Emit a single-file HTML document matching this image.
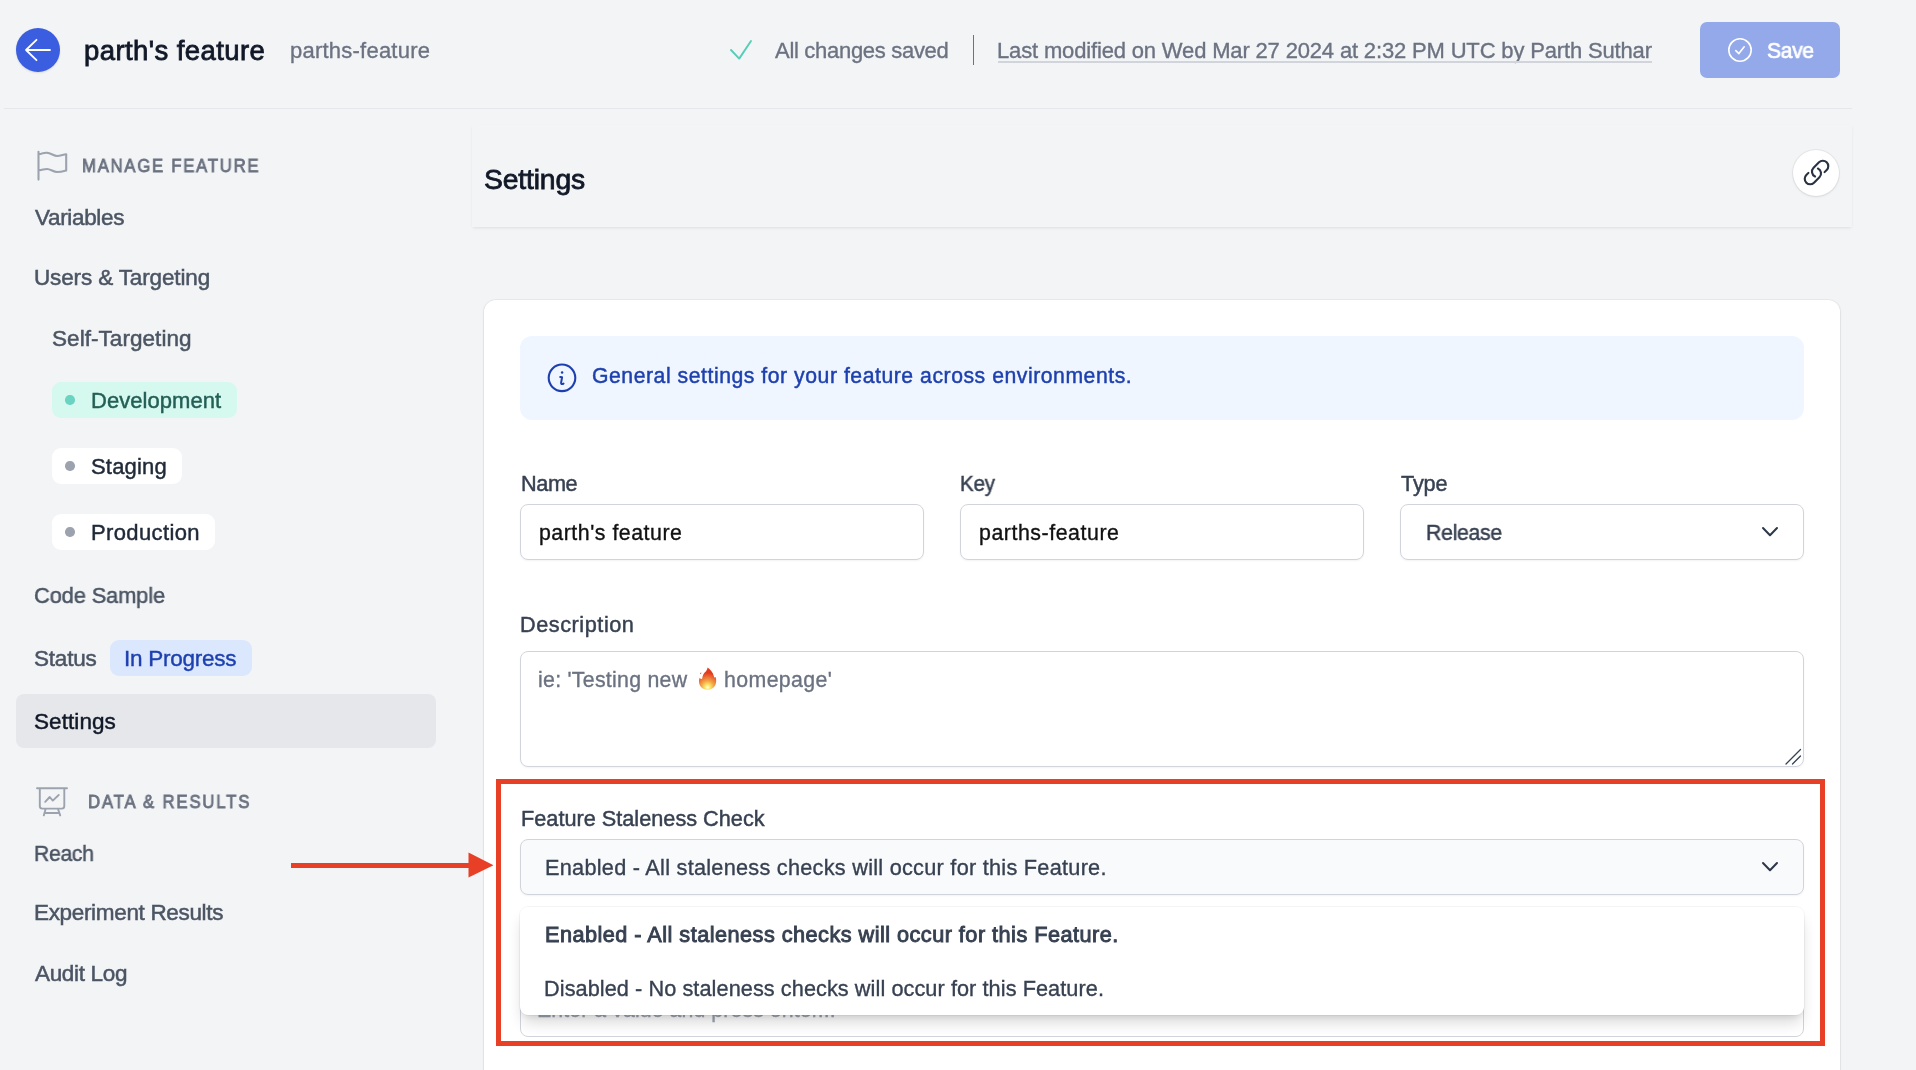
<!DOCTYPE html>
<html><head><meta charset="utf-8">
<style>
*{box-sizing:border-box;margin:0;padding:0}
html,body{width:1916px;height:1070px;overflow:hidden;background:#f3f4f6;font-family:"Liberation Sans",sans-serif}
.a{position:absolute}
.t{position:absolute;white-space:nowrap;line-height:normal;will-change:transform}
svg{position:absolute;overflow:visible}
</style></head><body>
<!-- header -->
<div class="a" style="left:16px;top:28px;width:44px;height:44px;border-radius:50%;background:#3b5ddf;box-shadow:0 1px 2px rgba(0,0,0,.12)"></div>
<svg style="left:0;top:0" width="1916" height="120">
 <path d="M26 50 H50 M36.5 39.8 L26 50 L36.5 60.2" fill="none" stroke="#fff" stroke-width="1.8" stroke-linecap="round" stroke-linejoin="round"/>
 <path d="M731 50 L739.2 58.6 L751 41" fill="none" stroke="#56cdb8" stroke-width="1.9" stroke-linecap="round" stroke-linejoin="round"/>
</svg>
<div class="a" style="left:4px;top:108px;width:1848px;height:1px;background:#e5e7eb"></div>
<div class="t" id="title" style="left:84.10px;top:35.00px;font-size:27.5px;color:#111827;letter-spacing:0.418px;-webkit-text-stroke:0.8px #111827;">parth's feature</div>
<div class="t" id="keyh" style="left:289.57px;top:37.80px;font-size:22px;color:#6b7280;letter-spacing:0.232px;-webkit-text-stroke:0.35px #6b7280;">parths-feature</div>
<div class="t" id="saved" style="left:774.97px;top:37.80px;font-size:22px;color:#6b7280;letter-spacing:-0.298px;-webkit-text-stroke:0.35px #6b7280;">All changes saved</div>
<div class="a" style="left:972.5px;top:35px;width:1.5px;height:30px;background:#6b7280"></div>
<div class="t" id="mod" style="left:997.17px;top:37.80px;font-size:22px;color:#6b7280;letter-spacing:-0.159px;-webkit-text-stroke:0.35px #6b7280;">Last modified on Wed Mar 27 2024 at 2:32 PM UTC by Parth Suthar</div>
<div class="a" style="left:998px;top:61px;width:654px;height:1.5px;background:#d1d5db"></div>
<div class="a" style="left:1700px;top:22px;width:140px;height:56px;border-radius:7px;background:#93a9ea"></div>
<svg style="left:0;top:0" width="1916" height="120">
 <circle cx="1740" cy="50" r="11.2" fill="none" stroke="#fff" stroke-width="1.6"/>
 <path d="M1735.8 50.6 L1738.9 53.6 L1744.2 46.8" fill="none" stroke="#fff" stroke-width="1.6" stroke-linecap="round" stroke-linejoin="round"/>
</svg>
<div class="t" id="save" style="left:1767.38px;top:37.80px;font-size:22px;color:#ffffff;letter-spacing:-0.356px;-webkit-text-stroke:0.7px #ffffff;transform:scaleX(0.96);transform-origin:0 0;">Save</div>

<!-- sidebar -->
<svg style="left:0;top:0" width="470" height="1070">
 <path d="M38.5 151.8 V179.6 M38.5 154.6 C42 153.2 44 152.6 47 152.8 C51 153.3 54 156 57 156 C60.5 156 63 154.6 66.2 154.2 V170.4 C63 171.3 60.5 172 57 172 C53.5 172 50.5 169 47 169 C43.5 169 41 169.8 38.5 170.6" fill="none" stroke="#9ca3af" stroke-width="2.1" stroke-linecap="round" stroke-linejoin="round"/>
 <path d="M37 788.3 H67 M39.8 788.3 V806 Q39.8 808.6 42.4 808.6 H61.7 Q64.3 808.6 64.3 806 V788.3 M45.6 809 L43.8 815.4 M58 809 L60.2 815.4 M45 813 H59 M45.2 801.8 L49.7 797 L52.8 800.6 L58.7 795" fill="none" stroke="#9ca3af" stroke-width="1.9" stroke-linecap="round" stroke-linejoin="round"/>
</svg>
<div class="t" id="manage" style="left:82.28px;top:154.80px;font-size:18.6px;color:#6b7280;letter-spacing:1.929px;-webkit-text-stroke:0.85px #6b7280;transform:scaleX(0.9);transform-origin:0 0;">MANAGE FEATURE</div>
<div class="t" id="variables" style="left:35.25px;top:205.20px;font-size:22.5px;color:#4b5563;letter-spacing:-0.335px;-webkit-text-stroke:0.5px #4b5563;">Variables</div>
<div class="t" id="users" style="left:34.25px;top:265.00px;font-size:22.5px;color:#4b5563;letter-spacing:-0.138px;-webkit-text-stroke:0.5px #4b5563;">Users &amp; Targeting</div>
<div class="t" id="self" style="left:52.05px;top:325.50px;font-size:22.5px;color:#4b5563;letter-spacing:0.053px;-webkit-text-stroke:0.5px #4b5563;">Self-Targeting</div>
<div class="a" style="left:52px;top:382px;width:185px;height:36px;border-radius:9px;background:#d5f8ef"></div>
<div class="a" style="left:65.3px;top:395.3px;width:9.4px;height:9.4px;border-radius:50%;background:#6bd3c1"></div>
<div class="t" id="dev" style="left:91.02px;top:388.00px;font-size:22px;color:#245f56;letter-spacing:0.044px;-webkit-text-stroke:0.45px #245f56;">Development</div>
<div class="a" style="left:52px;top:448px;width:130px;height:36px;border-radius:9px;background:#fff"></div>
<div class="a" style="left:65.3px;top:461.3px;width:9.4px;height:9.4px;border-radius:50%;background:#9ca3af"></div>
<div class="t" id="staging" style="left:91.22px;top:454.00px;font-size:22px;color:#1f2937;letter-spacing:0.195px;-webkit-text-stroke:0.45px #1f2937;">Staging</div>
<div class="a" style="left:52px;top:514px;width:163px;height:36px;border-radius:9px;background:#fff"></div>
<div class="a" style="left:65.3px;top:527.3px;width:9.4px;height:9.4px;border-radius:50%;background:#9ca3af"></div>
<div class="t" id="prod" style="left:91.22px;top:520.00px;font-size:22px;color:#1f2937;letter-spacing:0.379px;-webkit-text-stroke:0.45px #1f2937;">Production</div>
<div class="t" id="code" style="left:34.17px;top:582.90px;font-size:22.5px;color:#4b5563;letter-spacing:-0.119px;-webkit-text-stroke:0.5px #4b5563;transform:scaleX(0.97);transform-origin:0 0;">Code Sample</div>
<div class="t" id="status" style="left:34.25px;top:645.90px;font-size:22.5px;color:#4b5563;letter-spacing:-0.207px;-webkit-text-stroke:0.5px #4b5563;">Status</div>
<div class="a" style="left:110px;top:640px;width:142px;height:36px;border-radius:9px;background:#dbe7fc"></div>
<div class="t" id="inprog" style="left:123.60px;top:645.90px;font-size:22.5px;color:#1e40af;letter-spacing:-0.260px;-webkit-text-stroke:0.4px #1e40af;">In Progress</div>
<div class="a" style="left:16px;top:694px;width:420px;height:54px;border-radius:8px;background:#e5e7eb"></div>
<div class="t" id="navsettings" style="left:34.23px;top:708.60px;font-size:22.5px;color:#111827;letter-spacing:0.072px;-webkit-text-stroke:0.45px #111827;">Settings</div>
<div class="t" id="data" style="left:88.28px;top:791.20px;font-size:18.6px;color:#6b7280;letter-spacing:2.030px;-webkit-text-stroke:0.85px #6b7280;transform:scaleX(0.9);transform-origin:0 0;">DATA &amp; RESULTS</div>
<div class="t" id="reach" style="left:34.30px;top:841.30px;font-size:22.5px;color:#4b5563;letter-spacing:-0.315px;-webkit-text-stroke:0.5px #4b5563;transform:scaleX(0.94);transform-origin:0 0;">Reach</div>
<div class="t" id="exp" style="left:34.25px;top:900.40px;font-size:22.5px;color:#4b5563;letter-spacing:-0.331px;-webkit-text-stroke:0.5px #4b5563;">Experiment Results</div>
<div class="t" id="audit" style="left:35.25px;top:960.60px;font-size:22.5px;color:#4b5563;letter-spacing:-0.333px;-webkit-text-stroke:0.5px #4b5563;">Audit Log</div>

<!-- settings header -->
<div class="a" style="left:472px;top:125px;width:1380px;height:102px;background:#f3f4f6;box-shadow:0 2px 3px -1px rgba(0,0,0,.09),1px 0 2px -1px rgba(0,0,0,.06),-1px 0 2px -1px rgba(0,0,0,.04)"></div>
<div class="t" id="hsettings" style="left:484.30px;top:163.00px;font-size:28.3px;color:#111827;letter-spacing:-0.157px;-webkit-text-stroke:0.8px #111827;">Settings</div>
<div class="a" style="left:1793px;top:150px;width:46px;height:46px;border-radius:50%;background:#fff;box-shadow:0 0 0 1px rgba(0,0,0,.05),0 1px 3px rgba(0,0,0,.08)"></div>
<svg style="left:1801.5px;top:158.2px" width="29" height="29" viewBox="0 0 24 24">
 <path d="M13.19 8.688a4.5 4.5 0 011.242 7.244l-4.5 4.5a4.5 4.5 0 01-6.364-6.364l1.757-1.757m13.35-.622l1.757-1.757a4.5 4.5 0 00-6.364-6.364l-4.5 4.5a4.5 4.5 0 001.242 7.244" fill="none" stroke="#283241" stroke-width="1.75" stroke-linecap="round" stroke-linejoin="round"/>
</svg>

<!-- card -->
<div class="a" style="left:484px;top:300px;width:1356px;height:900px;border-radius:12px;background:#fff;box-shadow:0 0 0 1px rgba(0,0,0,.04),0 1px 3px rgba(0,0,0,.08)"></div>
<div class="a" style="left:520px;top:336px;width:1284px;height:84px;border-radius:12px;background:#eff6ff"></div>
<svg style="left:0;top:0" width="1916" height="1070">
 <circle cx="562" cy="377.8" r="13.3" fill="none" stroke="#1e40af" stroke-width="2.1"/>
 <path d="M560.2 376.9 L562.1 377.3 L561.1 382.6 C560.9 384 561.9 384.6 563.5 383.6" fill="none" stroke="#1e40af" stroke-width="2" stroke-linecap="round" stroke-linejoin="round"/>
 <circle cx="562.1" cy="372.4" r="1.25" fill="#1e40af"/>
</svg>
<div class="t" id="info" style="left:592.12px;top:363.90px;font-size:21.2px;color:#1e40af;letter-spacing:0.540px;-webkit-text-stroke:0.45px #1e40af;">General settings for your feature across environments.</div>

<div class="t" id="name" style="left:520.52px;top:470.80px;font-size:21.7px;color:#374151;letter-spacing:-0.413px;-webkit-text-stroke:0.45px #374151;">Name</div>
<div class="t" id="key" style="left:960.36px;top:470.70px;font-size:21.7px;color:#374151;letter-spacing:-0.225px;-webkit-text-stroke:0.45px #374151;transform:scaleX(0.95);transform-origin:0 0;">Key</div>
<div class="t" id="type" style="left:1401.32px;top:471.10px;font-size:21.7px;color:#374151;letter-spacing:-0.169px;-webkit-text-stroke:0.45px #374151;">Type</div>
<div class="a" style="left:520px;top:504px;width:404px;height:56px;border:1px solid #d1d5db;border-radius:8px;background:#fff;box-shadow:0 1px 2px rgba(0,0,0,.05)"></div>
<div class="a" style="left:960px;top:504px;width:404px;height:56px;border:1px solid #d1d5db;border-radius:8px;background:#fff;box-shadow:0 1px 2px rgba(0,0,0,.05)"></div>
<div class="a" style="left:1400px;top:504px;width:404px;height:56px;border:1px solid #d1d5db;border-radius:8px;background:#fff;box-shadow:0 1px 2px rgba(0,0,0,.05)"></div>
<div class="t" id="inname" style="left:538.97px;top:520.70px;font-size:21.3px;color:#111111;letter-spacing:0.530px;-webkit-text-stroke:0.35px #111111;">parth's feature</div>
<div class="t" id="inkey" style="left:979.38px;top:520.70px;font-size:21.3px;color:#111111;letter-spacing:0.562px;-webkit-text-stroke:0.35px #111111;">parths-feature</div>
<div class="t" id="release" style="left:1425.66px;top:520.20px;font-size:22.2px;color:#374151;letter-spacing:-0.329px;-webkit-text-stroke:0.45px #374151;transform:scaleX(0.96);transform-origin:0 0;">Release</div>
<svg style="left:0;top:0" width="1916" height="1070">
 <path d="M1763 528 L1770 535.2 L1777 528" fill="none" stroke="#2d3748" stroke-width="2" stroke-linecap="round" stroke-linejoin="round"/>
</svg>

<div class="t" id="desc" style="left:520.23px;top:612.30px;font-size:21.7px;color:#374151;letter-spacing:0.543px;-webkit-text-stroke:0.45px #374151;">Description</div>
<div class="a" style="left:520px;top:651px;width:1284px;height:116px;border:1px solid #d1d5db;border-radius:8px;background:#fff;box-shadow:0 1px 2px rgba(0,0,0,.05)"></div>
<div class="t" id="ph1" style="left:538.47px;top:668.00px;font-size:21.3px;color:#6b7280;letter-spacing:0.279px;-webkit-text-stroke:0.35px #6b7280;">ie: 'Testing new</div>
<svg style="left:697.5px;top:667px" width="19" height="23" viewBox="0 0 19 23">
 <defs><radialGradient id="fg" cx="9.6" cy="19.8" r="14" gradientUnits="userSpaceOnUse" fx="9.6" fy="20.5">
  <stop offset="0" stop-color="#fffde8"/><stop offset="0.18" stop-color="#fbe86a"/><stop offset="0.45" stop-color="#f3a546"/><stop offset="0.75" stop-color="#eb6a35"/><stop offset="1" stop-color="#e23b1e"/></radialGradient></defs>
 <path d="M9.6 0.5 C12 2.5 15 5 15.8 9 C16.2 10.6 16.8 10.9 17.6 10.1 C18.5 12.5 18.4 16 17.2 18.2 C15.8 21 13 22.8 9.6 22.8 C5.5 22.8 2.3 20.5 1.3 16.8 C0.7 14.5 1 12.2 1.7 10.8 C2.5 12 3.4 12.3 4.1 11.8 C4.6 8.4 5.8 6.2 7.3 5 C8.4 3.9 9.2 2.6 9.6 0.5 Z" fill="url(#fg)"/>
 <ellipse cx="2.7" cy="6.3" rx="0.55" ry="0.95" transform="rotate(35 2.7 6.3)" fill="#ec6a4a"/>
</svg>
<div class="t" id="ph2" style="left:723.88px;top:668.00px;font-size:21.3px;color:#6b7280;letter-spacing:0.400px;-webkit-text-stroke:0.35px #6b7280;">homepage'</div>
<svg style="left:0;top:0" width="1916" height="1070">
 <path d="M1786 764 L1800.5 749.5 M1792.5 764 L1800.5 756" fill="none" stroke="#374151" stroke-width="1.3" stroke-linecap="round"/>
</svg>

<!-- staleness -->
<div class="t" id="fsc" style="left:520.52px;top:806.00px;font-size:21.7px;color:#374151;letter-spacing:0.004px;-webkit-text-stroke:0.45px #374151;">Feature Staleness Check</div>
<div class="a" style="left:520px;top:839px;width:1284px;height:56px;border:1px solid #d1d5db;border-radius:8px;background:#f9fafb;box-shadow:0 1px 2px rgba(0,0,0,.05)"></div>
<div class="t" id="sel" style="left:545.47px;top:854.90px;font-size:21.7px;color:#374151;letter-spacing:0.266px;-webkit-text-stroke:0.35px #374151;">Enabled - All staleness checks will occur for this Feature.</div>
<svg style="left:0;top:0" width="1916" height="1070">
 <path d="M1763 863 L1770 870.2 L1777 863" fill="none" stroke="#2d3748" stroke-width="2" stroke-linecap="round" stroke-linejoin="round"/>
</svg>
<div class="a" style="left:520px;top:981px;width:1284px;height:56px;border:1px solid #d1d5db;border-radius:8px;background:#fff"></div>
<div class="t" id="enter" style="left:536.67px;top:998.00px;font-size:21.3px;color:#9ca3af;letter-spacing:0.084px;-webkit-text-stroke:0.35px #9ca3af;">Enter a value and press enter...</div>
<div class="a" style="left:520px;top:906.5px;width:1284px;height:108.4px;border-radius:8px;background:#fff;box-shadow:0 0 0 1px rgba(0,0,0,.04),0 10px 15px -3px rgba(0,0,0,.16),0 4px 6px -2px rgba(0,0,0,.08)"></div>
<div class="t" id="opt1" style="left:544.55px;top:921.80px;font-size:21.7px;color:#374151;letter-spacing:0.469px;-webkit-text-stroke:0.9px #374151;">Enabled - All staleness checks will occur for this Feature.</div>
<div class="t" id="opt2" style="left:544.17px;top:976.00px;font-size:21.7px;color:#374151;letter-spacing:0.074px;-webkit-text-stroke:0.35px #374151;">Disabled - No staleness checks will occur for this Feature.</div>

<!-- annotation -->
<div class="a" style="left:496px;top:779px;width:1329px;height:267px;border:5px solid #e84027"></div>
<div class="a" style="left:291px;top:863px;width:180px;height:5px;background:#e84027"></div>
<svg style="left:0;top:0" width="1916" height="1070">
 <path d="M468.5 852.6 L493.5 865.3 L468.5 877.6 Z" fill="#e84027"/>
</svg>
</body></html>
